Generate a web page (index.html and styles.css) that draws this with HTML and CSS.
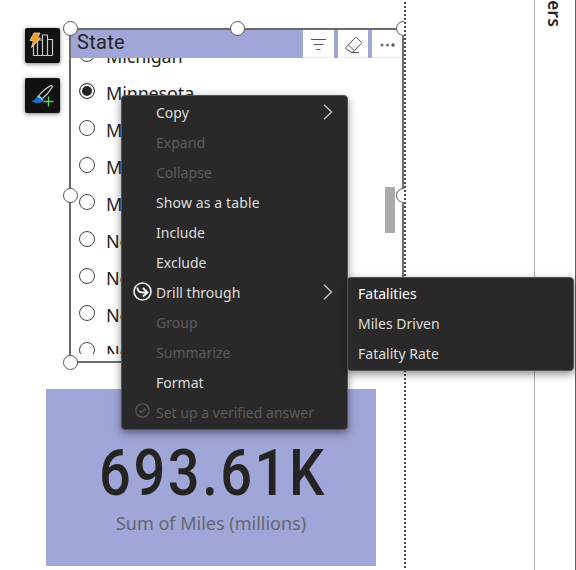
FILE: index.html
```html
<!DOCTYPE html>
<html lang="en">
<head>
<meta charset="utf-8">
<title>Report</title>
<link rel="stylesheet" href="styles.css">
</head>
<body>
<div class="workspace">
  <main class="canvas">
    <div class="visual-row">
      <aside class="tools">
        <div class="tool"><svg width="35" height="35" viewBox="0 0 35 35" fill="none"><path d="M8.500 17v10.500h19M12.500 27.500V12h5v15.500M17.500 12V7h5v20.500M22.500 11.500h5v16" stroke="#c8c8c8" stroke-width="1.200"/><path d="M9 5h6l-2.500 5h3L6.500 19.500l2-7H5z" fill="#f39b28" stroke="#ffe2a8" stroke-width=".8"/></svg></div>
        <div class="tool"><svg width="35" height="35" viewBox="0 0 35 35" fill="none"><path d="M13.500 18Q19 11 26 7.500q2 0 1 2Q23 16 17 21z" stroke="#ddd" stroke-width="1.200"/><path d="M6 23q3 0 4.500-2.500 2-3.500 5.500-1.500t1.500 4q-3 4.500-11.500 0z" fill="#1473c8"/><path d="M12.500 18.500q4 0 5 4" stroke="#eee"/><path d="M23.500 18.500v10M18.500 23.500h10" stroke="#57d36b" stroke-width="1.300"/></svg></div>
      </aside>
      <section class="slicer">
        <header class="slicer-head">
          <h2>State</h2>
          <div class="actions">
            <span class="action"><svg width="30" height="28" viewBox="0 0 30 28" fill="none" stroke="#555" stroke-width="1.100"><path d="M8 9.500h15M10.500 14.500h10M13 19.500h4.500"/></svg></span>
            <span class="action"><svg width="30" height="28" viewBox="0 0 30 28" fill="none" stroke="#555"><path d="m8 17.500 9.300-9.800q.7-.7 1.400 0l4.600 4.300q.7.700 0 1.400L15 22q-1 1-2 0l-5-3q-.7-.7 0-1.500zM10.300 15l6 5.700M13 22.500h8"/></svg></span>
            <span class="action"><svg width="30" height="28" viewBox="0 0 30 28" fill="#777"><circle cx="10" cy="15" r="1.600"/><circle cx="15.500" cy="15" r="1.600"/><circle cx="21" cy="15" r="1.700" fill="#555"/></svg></span>
          </div>
        </header>
        <div class="list">
          <label class="state"><i class="radio"></i><span>Michigan</span></label>
          <label class="state"><i class="radio on"></i><span>Minnesota</span></label>
          <label class="state"><i class="radio"></i><span>Mississippi</span></label>
          <label class="state"><i class="radio"></i><span>Missouri</span></label>
          <label class="state"><i class="radio"></i><span>Montana</span></label>
          <label class="state"><i class="radio"></i><span>Nebraska</span></label>
          <label class="state"><i class="radio"></i><span>Nevada</span></label>
          <label class="state"><i class="radio"></i><span>New Jersey</span></label>
          <label class="state"><i class="radio"></i><span>New Mexico</span></label>
        </div>
        <i class="scrollbar"></i>
        <i class="handle tl"></i><i class="handle tc"></i><i class="handle tr"></i>
        <i class="handle ml"></i><i class="handle mr"></i><i class="handle bl"></i>
      </section>
    </div>
    <section class="card">
      <div class="value">693.61K</div>
      <div class="label">Sum of Miles (millions)</div>
    </section>
  </main>
  <div class="gutter"></div>
  <aside class="filters"><span>Filters</span></aside>
</div>

<nav class="menu context">
  <div class="item"><span>Copy</span><svg class="chevron" width="10" height="16" viewBox="0 0 10 16"><path d="m1 .7 7.500 7.300L1 15.300"/></svg></div>
  <div class="item off"><span>Expand</span></div>
  <div class="item off"><span>Collapse</span></div>
  <div class="item"><span class="wide">Show as a table</span></div>
  <div class="item"><span>Include</span></div>
  <div class="item"><span>Exclude</span></div>
  <div class="item"><svg class="mark" width="20" height="20" viewBox="0 0 20 20" fill="none" stroke="#f3f3f3" stroke-width="1.600"><circle cx="10.500" cy="9.500" r="8.500"/><path d="M5.500 5.500q0 5 5 5h5M11 6l4.500 4.500-4.500 4" stroke-width="1.900"/></svg><span>Drill through</span><svg class="chevron" width="10" height="16" viewBox="0 0 10 16"><path d="m1 .7 7.500 7.300L1 15.300"/></svg></div>
  <div class="item off"><span>Group</span></div>
  <div class="item off"><span>Summarize</span></div>
  <div class="item"><span>Format</span></div>
  <div class="item off"><svg class="mark" width="20" height="20" viewBox="0 0 20 20" fill="none" stroke="#606060" stroke-width="1.100"><circle cx="10.500" cy="8.500" r="6.700"/><path d="m7.500 8.500 2 2 4-4"/></svg><span>Set up a verified answer</span></div>
</nav>
<nav class="menu sub">
  <div class="item active"><span>Fatalities</span></div>
  <div class="item"><span>Miles Driven</span></div>
  <div class="item"><span>Fatality Rate</span></div>
</nav>
</body>
</html>
```
FILE: styles.css
```css
* { box-sizing: border-box; }
body { margin: 0; width: 576px; height: 570px; overflow: hidden; background: #fff; font-family: "Noto Sans", sans-serif; color: #252423; }
svg { display: block; flex: none; }
.workspace { display: flex; height: 570px; }
.canvas { flex: none; width: 406px; padding-top: 28px; overflow: hidden; background: repeating-linear-gradient(to bottom, #fff 0 2px, #4a4a4a 2px 4px) right top / 2px 100% no-repeat; }
.visual-row { display: flex; height: 334px; padding-left: 25px; gap: 9px; }
.tools { display: flex; flex-direction: column; gap: 15px; width: 35px; }
.tool { width: 35px; height: 35px; background: #111; border-radius: 2px; box-shadow: 0 1px 4px #0008; }
.slicer { position: relative; width: 335px; height: 335px; border: 2px solid #6b6a69; border-right-color: #737373; }
.slicer-head { display: flex; justify-content: space-between; height: 28px; background: #a0a6d8; }
h2 { margin: 0; padding-left: 6px; font: 400 20px/25px Roboto, sans-serif; letter-spacing: .3px; }
.actions { display: flex; gap: 4px; }
.action { width: 30px; height: 28px; background: #fff; border-bottom: 1px solid #eceaf7; }
.action:first-child { width: 31px; }
.list { height: 296px; overflow: hidden; padding-left: 8px; }
.state { display: flex; align-items: center; gap: 11px; height: 37px; font-size: 18px; white-space: nowrap; }
.state:first-child { margin-top: -20px; }
.state span { line-height: 24px; margin-bottom: 2px; letter-spacing: -.15px; }
.radio { flex: none; width: 16px; height: 16px; border: 1px solid #444; border-radius: 50%; margin-bottom: 6px; }
.radio.on { background: #252423; box-shadow: inset 0 0 0 2px #fff; }
.handle { position: absolute; width: 15px; height: 15px; border: 1px solid #555; border-radius: 50%; background: #fff; }
.tl { left: -8.500px; top: -9.500px; } .tc { left: 158.500px; top: -9.500px; } .tr { left: 325px; top: -9.500px; clip-path: inset(0 7px 0 0); }
.ml { left: -8.500px; top: 157.500px; } .mr { left: 325px; top: 157.500px; clip-path: inset(0 7px 0 0); } .bl { left: -8.500px; top: 324.500px; }
.scrollbar { position: absolute; left: 314px; top: 157px; width: 10px; height: 46px; background: #aaa; }
.card { width: 330px; height: 177px; margin: 27px 0 0 46px; padding-top: 49px; text-align: center; background: #a0a6d8; }
.value { font: 500 65px/70px Roboto, sans-serif; letter-spacing: 3px; transform: translateX(2px) scaleX(.86); white-space: nowrap; }
.label { margin-top: 2px; font-size: 18px; line-height: 27px; color: #666670; }
.gutter { width: 129px; border-right: 1px solid #b3b0ad; }
.filters { display: flex; align-items: flex-end; width: 41px; height: 570px; border-right: 1px solid #605e5c; padding-left: 7px; }
.filters span { writing-mode: vertical-rl; font-weight: 600; font-size: 17px; line-height: 24px; letter-spacing: .4px; margin-bottom: 543px; }
.menu { position: absolute; width: 227px; background: #292929; border: 1px solid #555; border-radius: 4px; box-shadow: 0 3px 9px #0007; }
.context { left: 121px; top: 95px; height: 335px; padding-top: 2px; }
.context .item { position: relative; top: -1px; }
.sub { left: 347px; top: 277px; height: 94px; }
.item { display: flex; align-items: center; height: 30px; color: #dedede; font-size: 14px; white-space: nowrap; }
.context .item { padding: 0 14px 0 10px; }
.sub .item { padding-left: 10px; }
.item span { letter-spacing: .02px; }
.item .wide { letter-spacing: .12px; }
.context span:first-child { margin-left: 24px; }
.mark { margin-right: 4px; }
.chevron { margin-left: auto; fill: none; stroke: #ccc; stroke-width: 1.300; }
.off { color: #5c5c5c; }
.active { color: #fff; }
```
